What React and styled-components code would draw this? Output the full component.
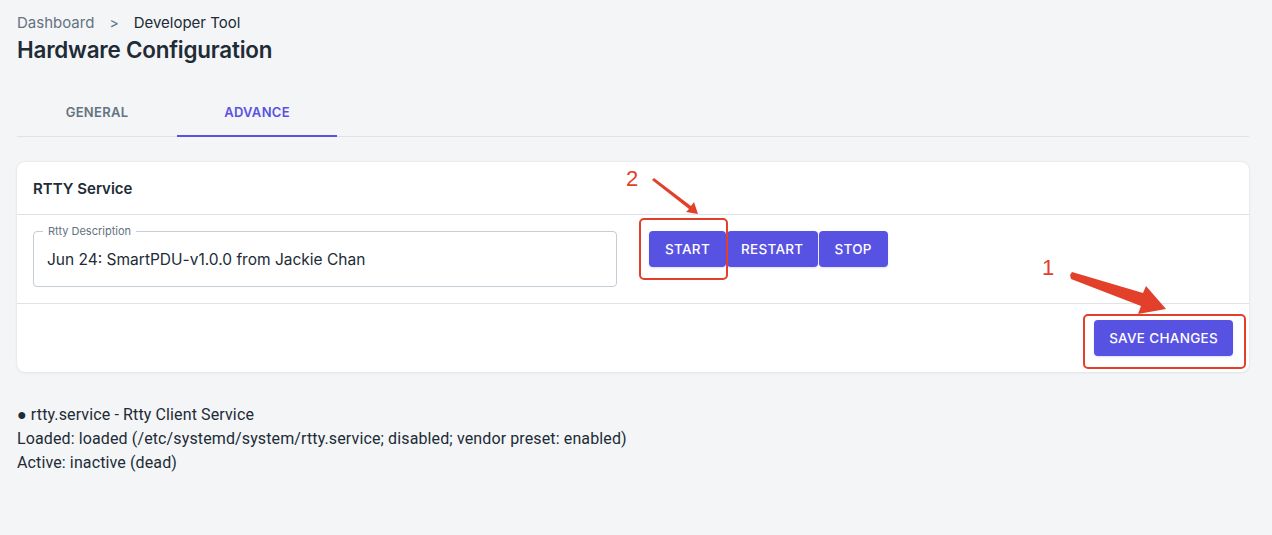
import React from 'react';
import styled, { createGlobalStyle } from 'styled-components';

const colors = {
  page: '#f4f5f7',
  white: '#ffffff',
  text: '#212b36',
  muted: '#637381',
  line: '#dfe3e8',
  primary: '#5852e3',
  red: '#e2402b',
};

const GlobalStyle = createGlobalStyle`
  html, body {
    margin: 0;
    padding: 0;
    background: ${colors.page};
  }
  body {
    font-family: Inter, 'Noto Sans', sans-serif;
    color: ${colors.text};
  }
`;

const Page = styled.div`
  position: relative;
  width: 1272px;
  height: 535px;
  box-sizing: border-box;
  padding: 12px 23px 0 17px;
  overflow: hidden;
`;

const Breadcrumbs = styled.div`
  display: flex;
  align-items: center;
  gap: 15px;
  font-size: 15px;
  line-height: 22px;
`;

const Crumb = styled.span`
  color: ${props => (props.current ? colors.text : colors.muted)};
`;

const Separator = styled.span`
  color: ${colors.muted};
  font-size: 14px;
`;

const Title = styled.h1`
  margin: 1px 0 0;
  font-size: 22.4px;
  line-height: 30px;
  font-weight: 600;
  letter-spacing: -0.2px;
`;

const Tabs = styled.div`
  display: flex;
  margin-top: 24px;
  border-bottom: 1px solid ${colors.line};
`;

const Tab = styled.div`
  width: 160px;
  height: 48px;
  box-sizing: border-box;
  display: flex;
  align-items: center;
  justify-content: center;
  font-size: 13px;
  font-weight: 600;
  letter-spacing: 0.3px;
  text-transform: uppercase;
  color: ${props => (props.active ? colors.primary : colors.muted)};
  border-bottom: 2px solid ${props => (props.active ? colors.primary : 'transparent')};
  margin-bottom: -1px;
`;

const Card = styled.section`
  margin-top: 25px;
  background: ${colors.white};
  border-radius: 8px;
  box-shadow: 0 0 2px rgba(145, 158, 171, 0.24), 0 1px 3px rgba(145, 158, 171, 0.12);
`;

const CardHeader = styled.div`
  height: 52px;
  display: flex;
  align-items: center;
  padding: 0 16px;
  font-size: 15px;
  font-weight: 600;
  border-bottom: 1px solid ${colors.line};
`;

const CardBody = styled.div`
  display: flex;
  align-items: flex-start;
  gap: 32px;
  padding: 16px;
  border-bottom: 1px solid ${colors.line};
`;

const CardFooter = styled.div`
  display: flex;
  justify-content: flex-end;
  padding: 16px;
`;

const Field = styled.fieldset`
  position: relative;
  width: 584px;
  height: 56px;
  box-sizing: border-box;
  margin: 0;
  padding: 0 13px;
  border: 1px solid #c4cdd5;
  border-radius: 4px;
  display: flex;
  align-items: center;
`;

const FieldLabel = styled.legend`
  padding: 0 5px;
  margin-left: -5px;
  font-size: 11px;
  line-height: 12px;
  color: ${colors.muted};
  position: absolute;
  top: -7px;
  left: 14px;
  background: ${colors.white};
`;

const FieldValue = styled.span`
  font-size: 15.5px;
  color: ${colors.text};
  margin-top: 1px;
`;

const ButtonGroup = styled.div`
  position: relative;
  display: flex;
  gap: 1px;
`;

const Button = styled.button`
  height: 36px;
  padding: 0 ${props => props.pad || 16}px;
  border: none;
  border-radius: 4px;
  background: ${colors.primary};
  color: ${colors.white};
  font-family: Inter, 'Noto Sans', sans-serif;
  font-size: 13.5px;
  font-weight: 500;
  letter-spacing: 0.3px;
  text-transform: uppercase;
  box-shadow: 0 1px 2px rgba(88, 82, 227, 0.2);
`;

const SaveWrap = styled.div`
  position: relative;
`;

const Highlight = styled.div`
  position: absolute;
  box-sizing: border-box;
  border: 2px solid ${colors.red};
  border-radius: 5px;
  pointer-events: none;
`;

const Status = styled.div`
  margin-top: 31px;
  font-family: Roboto, 'Liberation Sans', sans-serif;
  font-size: 16px;
  line-height: 24px;
  color: ${colors.text};
  letter-spacing: 0.12px;
`;

const Note = styled.span`
  position: absolute;
  font-family: 'Liberation Sans', Arial, sans-serif;
  font-size: 22px;
  line-height: 22px;
  color: ${colors.red};
`;

const Overlay = styled.svg`
  position: absolute;
  left: 0;
  top: 0;
  pointer-events: none;
`;

const App = () => (
  <Page>
    <GlobalStyle />
    <Breadcrumbs>
      <Crumb>Dashboard</Crumb>
      <Separator>&gt;</Separator>
      <Crumb current>Developer Tool</Crumb>
    </Breadcrumbs>
    <Title>Hardware Configuration</Title>

    <Tabs>
      <Tab>General</Tab>
      <Tab active>Advance</Tab>
    </Tabs>

    <Card>
      <CardHeader>RTTY Service</CardHeader>
      <CardBody>
        <Field>
          <FieldLabel>Rtty Description</FieldLabel>
          <FieldValue>Jun 24: SmartPDU-v1.0.0 from Jackie Chan</FieldValue>
        </Field>
        <ButtonGroup>
          <Button pad={16}>Start</Button>
          <Button pad={14}>Restart</Button>
          <Button pad={16}>Stop</Button>
          <Highlight style={{ left: -10, top: -13, width: 89, height: 62 }} />
        </ButtonGroup>
      </CardBody>
      <CardFooter>
        <SaveWrap>
          <Button pad={15}>Save changes</Button>
          <Highlight style={{ left: -11, top: -6, width: 163, height: 55 }} />
        </SaveWrap>
      </CardFooter>
    </Card>

    <Status>
      <div>● rtty.service - Rtty Client Service</div>
      <div>Loaded: loaded (/etc/systemd/system/rtty.service; disabled; vendor preset: enabled)</div>
      <div>Active: inactive (dead)</div>
    </Status>

    <Note style={{ left: 626, top: 168 }}>2</Note>
    <Note style={{ left: 1042, top: 257 }}>1</Note>
    <Overlay width="1272" height="535" viewBox="0 0 1272 535">
      <path d="M652 180 L654 178 L691 206 L694 202 L698 214 L686 212 L689 209 Z" fill={colors.red} />
      <path d="M1070 275 L1072 272 L1143 293 L1146 286 L1166 309 L1138 314 L1141 306 L1071 279 Z" fill={colors.red} />
    </Overlay>
  </Page>
);

export default App;
